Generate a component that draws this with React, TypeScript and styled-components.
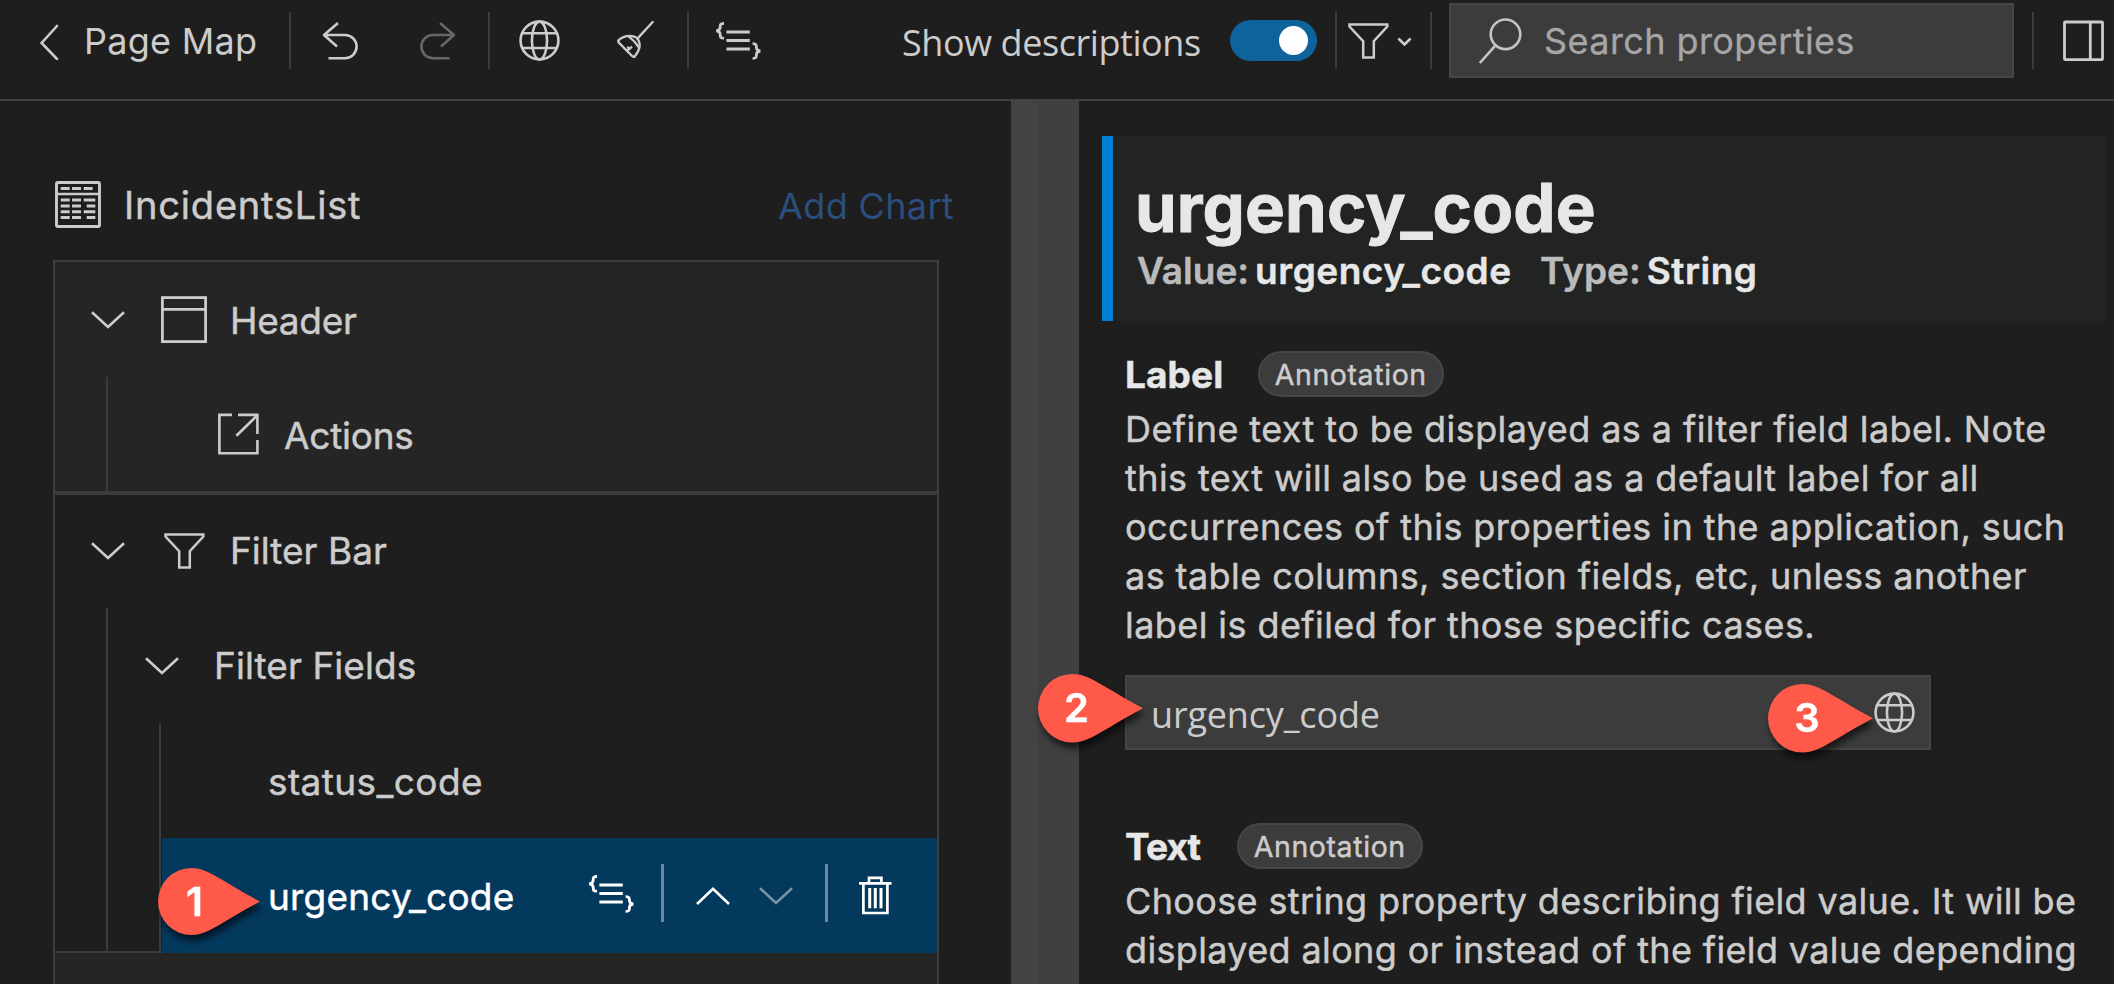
import React from "react";
import styled, { createGlobalStyle, css } from "styled-components";

const sans = `Inter, "Liberation Sans", sans-serif`;
const humanist = `"Open Sans", "Noto Sans", sans-serif`;

const color = {
  bg: "#1e1e1e",
  raised: "#252525",
  line: "#3c3c3c",
  toolbarLine: "#424242",
  text: "#cccccc",
  strong: "#e7e7e7",
  dim: "#bbbbbb",
  field: "#3c3c3c",
  fieldBorder: "#454545",
  selection: "#04395e",
  accent: "#007fd4",
  link: "#2b4e7e",
  toggle: "#0e639c",
  marker: "#ff594a",
};

const GlobalStyle = createGlobalStyle`
  * { box-sizing: border-box; }
  html, body { margin: 0; background: ${color.bg}; overflow: hidden; }
  button { all: unset; box-sizing: border-box; cursor: pointer; }
`;

const Page = styled.div`
  width: 2114px;
  height: 984px;
  overflow: hidden;
  display: flex;
  flex-direction: column;
  background: ${color.bg};
  color: ${color.text};
  font: 400 37px/1 ${sans};
  white-space: nowrap;
`;

/* ---------- toolbar ---------- */

const Toolbar = styled.header`
  flex: none;
  height: 101px;
  padding-bottom: 18px;
  display: flex;
  align-items: center;
  border-bottom: 2px solid ${color.toolbarLine};
`;

const Divider = styled.span`
  flex: none;
  width: 2px;
  height: 57px;
  background: ${color.line};
`;

const BackButton = styled.button`
  flex: none;
  display: flex;
  align-items: center;
  gap: 25px;
  width: 289px;
  padding-left: 39px;
  font: 400 36px/50px ${sans};
  letter-spacing: 0.27px;
`;

const ToolGroup = styled.div`
  flex: none;
  display: flex;
  width: 197px;
`;

const ToolButton = styled.button<{ $disabled?: boolean }>`
  flex: none;
  display: flex;
  justify-content: center;
  width: 98px;
  opacity: ${(p) => (p.$disabled ? 0.42 : 1)};
`;

const SwitchGroup = styled.label`
  flex: none;
  display: flex;
  align-items: center;
  justify-content: space-between;
  width: 415px;
  margin: 0 18px 0 115px;
`;

const SwitchText = styled.span`
  padding-top: 5px;
  font: 400 36px/50px ${humanist};
  letter-spacing: -0.43px;
`;

const Switch = styled.span`
  display: flex;
  align-items: center;
  justify-content: flex-end;
  width: 87px;
  height: 41px;
  padding-right: 9px;
  border-radius: 20.5px;
  background: ${color.toggle};
`;

const Knob = styled.span`
  width: 29px;
  height: 29px;
  border-radius: 50%;
  background: #fff;
`;

const FilterButton = styled.button`
  flex: none;
  display: flex;
  align-items: center;
  gap: 8px;
  width: 93px;
  padding-left: 11px;
`;

const SearchBox = styled.div`
  flex: none;
  display: flex;
  align-items: center;
  gap: 22px;
  width: 565px;
  height: 75px;
  margin: 0 18px 0 17px;
  padding-left: 27px;
  border: 2px solid ${color.fieldBorder};
  background: ${color.field};
  color: #a6a6a6;
  font: 400 36px/50px ${sans};
  letter-spacing: 0.42px;
  -webkit-text-stroke: 0.3px;

  svg {
    color: #c5c5c5;
  }
`;

const LayoutButton = styled.button`
  flex: none;
  display: flex;
  padding-left: 29px;
`;

/* ---------- left panel ---------- */

const Body = styled.main`
  flex: 1;
  min-height: 0;
  display: flex;
  -webkit-text-stroke: 0.45px;
`;

const OutlinePanel = styled.section`
  flex: none;
  width: 1011px;
  padding: 79px 72px 0 53px;
`;

const OutlineHeading = styled.div`
  display: flex;
  align-items: center;
  height: 48px;
  margin-bottom: 32px;
  padding-left: 2px;
`;

const OutlineTitle = styled.h2`
  flex: 1;
  margin: 0 0 0 23px;
  padding-top: 2px;
  font: 400 38px/46px ${sans};
  letter-spacing: 0.81px;
`;

const AddChart = styled.a`
  margin-right: -15px;
  padding-top: 3px;
  color: ${color.link};
  font: 400 36px/46px ${sans};
  letter-spacing: 0.35px;
  -webkit-text-stroke: 0;
`;

const Tree = styled.div`
  width: 886px;
  border: solid ${color.line};
  border-width: 0 2px;
`;

const TreeSection = styled.div<{ $raised?: boolean; $height: number }>`
  height: ${(p) => p.$height}px;
  border: solid ${color.line};
  border-width: 2px 0;
  background: ${(p) => (p.$raised ? color.raised : color.bg)};
`;

const TreeTail = styled.div`
  height: 31px;
  background: ${color.raised};
`;

const Branch = styled.div`
  margin-left: 51px;
  border-left: 2px solid ${color.line};
`;

const TreeRow = styled.div<{
  $indent: number;
  $gap?: number;
  $height?: number;
  $bottom?: number;
  $spacing?: number;
  $selected?: boolean;
}>`
  display: flex;
  align-items: center;
  gap: ${(p) => p.$gap ?? 0}px;
  height: ${(p) => p.$height ?? 115}px;
  padding: 0 0 ${(p) => p.$bottom ?? 0}px ${(p) => p.$indent}px;
  letter-spacing: ${(p) => p.$spacing ?? 0}px;
  ${(p) =>
    p.$selected &&
    css`
      position: relative;
      margin-left: 1px;
      background: ${color.selection};
      color: #fff;
    `}
`;

const IconSlot = styled.span`
  display: flex;
  justify-content: center;
  width: 46px;
`;

const RowLabel = styled.span<{ $drop?: number; $width?: number; $pull?: number }>`
  flex: none;
  ${(p) => p.$width && `width: ${p.$width}px;`}
  margin-left: ${(p) => p.$pull ?? 0}px;
  padding-top: ${(p) => p.$drop ?? 0}px;
  line-height: 46px;
`;

const RowActions = styled.div`
  display: flex;
  align-items: center;
`;

const RowAction = styled.button<{ $before: number; $raise?: number; $faded?: boolean }>`
  display: flex;
  margin-left: ${(p) => p.$before}px;
  padding-bottom: ${(p) => p.$raise ?? 0}px;
  opacity: ${(p) => (p.$faded ? 0.45 : 1)};
`;

const RowDivider = styled.span<{ $before: number }>`
  width: 3px;
  height: 58px;
  margin: 0 0 5px ${(p) => p.$before}px;
  background: #6b88a0;
`;

/* ---------- right panel ---------- */

const Splitter = styled.div`
  flex: none;
  width: 68px;
  background: linear-gradient(90deg, #434343 0 27px, #404040 27px);
`;

const PropertyPanel = styled.section`
  flex: 1;
  min-width: 0;
  padding: 35px 9px 0 23px;
`;

const Summary = styled.div`
  height: 185px;
  padding: 32px 0 0 22px;
  border-left: 11px solid ${color.accent};
  background: #222424;
  color: ${color.strong};
`;

const SummaryTitle = styled.h1`
  margin: 0;
  font: 700 67px/80px ${sans};
  letter-spacing: 0.13px;
  -webkit-text-stroke: 0.9px;
`;

const Meta = styled.dl`
  display: flex;
  margin: 0;
  padding-left: 2px;
  font: 600 37px/46px ${sans};
`;

const MetaName = styled.dt`
  color: ${color.dim};
`;

const MetaValue = styled.dd<{ $width: number }>`
  width: ${(p) => p.$width}px;
  margin: 0 0 0 6px;
  letter-spacing: 0.51px;
`;

const Property = styled.article<{ $top: number }>`
  margin: ${(p) => p.$top}px 0 0 23px;
`;

const PropertyHead = styled.div`
  display: flex;
  align-items: center;
  height: 46px;
`;

const PropertyName = styled.h3<{ $width: number; $spacing: number }>`
  width: ${(p) => p.$width}px;
  margin: 0;
  padding-top: 2px;
  color: ${color.strong};
  font: 700 37px/46px ${sans};
  letter-spacing: ${(p) => p.$spacing}px;
`;

const Chip = styled.span`
  display: flex;
  justify-content: center;
  width: 185.5px;
  height: 46px;
  border: 2px solid #464646;
  border-radius: 23px;
  background: ${color.field};
  font: 400 28.5px/44px ${sans};
  letter-spacing: 0.6px;
`;

const Description = styled.p<{ $spacing: number }>`
  margin: 8px 0 0;
  font: 400 36px/49px ${sans};
  letter-spacing: ${(p) => p.$spacing}px;
`;

const Field = styled.div`
  position: relative;
  display: flex;
  align-items: center;
  justify-content: space-between;
  width: 806px;
  height: 75px;
  margin-top: 25px;
  padding: 0 14px 0 24px;
  border: 2px solid ${color.fieldBorder};
  background: ${color.field};
`;

const FieldText = styled.span`
  padding-top: 5px;
  font: 400 36px/50px ${humanist};
  letter-spacing: -0.17px;
  -webkit-text-stroke: 0;
`;

/* ---------- callouts ---------- */

const Pin = styled.div<{ $left: number; $top: number }>`
  position: absolute;
  left: ${(p) => p.$left}px;
  top: ${(p) => p.$top}px;
  z-index: 2;
  display: grid;
  filter: drop-shadow(2px 6px 3px rgba(0, 0, 0, 0.6));
  > * {
    grid-area: 1 / 1;
  }
`;

const PinNumber = styled.span<{ $width: number }>`
  width: ${(p) => p.$width}px;
  text-align: center;
  color: #fff;
  font: 600 40px/68px ${sans};
  letter-spacing: 0;
`;

type CalloutProps = { n: number; left: number; top: number; width?: number; height?: number; labelWidth?: number };

const Callout = ({ n, left, top, width = 105, height = 68.5, labelWidth = 78 }: CalloutProps) => (
  <Pin $left={left} $top={top}>
    <svg width={width} height={height} viewBox="0 0 102 67" preserveAspectRatio="none">
      <path d="M33.5 0C50 0 62 12 102 33.5C62 55 50 67 33.5 67A33.5 33.5 0 0 1 33.5 0Z" fill={color.marker} />
    </svg>
    <PinNumber $width={labelWidth}>{n}</PinNumber>
  </Pin>
);

/* ---------- icons ---------- */

type IconProps = { w: number; h: number; sw?: number; children: React.ReactNode };

const Icon = ({ w, h, sw = 2.6, children }: IconProps) => (
  <svg width={w} height={h} viewBox={`0 0 ${w} ${h}`} fill="none" stroke="currentColor" strokeWidth={sw} aria-hidden="true">
    {children}
  </svg>
);

const BackIcon = () => (
  <Icon w={20} h={38}>
    <path d="M18 4L2.6 21L18 37" strokeLinecap="round" />
  </Icon>
);

const UndoIcon = () => (
  <Icon w={36} h={40}>
    <path d="M2 14H23A11.6 11.6 0 0 1 23 37.2H6.5M16 2L2 14L15 25.5" strokeLinejoin="round" />
  </Icon>
);

const RedoIcon = () => (
  <Icon w={36} h={40}>
    <path d="M34 14H13A11.6 11.6 0 0 0 13 37.2H29.5M20 2L34 14L21 25.5" strokeLinejoin="round" />
  </Icon>
);

const GlobeIcon = () => (
  <Icon w={41} h={41}>
    <circle cx="20.5" cy="20.5" r="18.9" />
    <ellipse cx="20.5" cy="20.5" rx="7.6" ry="18.9" />
    <path d="M3.5 13.3H37.5M3.5 28H37.5" />
  </Icon>
);

const BroomIcon = () => (
  <Icon w={40} h={38} sw={2.3}>
    <path d="M35.7 2L20.4 18.6" strokeLinecap="round" />
    <path d="M1.2 20.6Q6 16 12.6 15.9Q18 16 20.4 18.6Q22.6 21 22.7 26.4Q21.8 32 17.3 37Q15.6 37 13.8 34.8L1.6 22.4Z" strokeLinejoin="round" />
    <path d="M11.6 16.4Q17.5 20.6 22 27.6M9.6 31.2L12.8 28.6L15 26.6M12.8 28.8L10.2 27" />
  </Icon>
);

const CodeIcon = () => (
  <Icon w={47} h={38} sw={2.8}>
    <path d="M9 1.5C5.3 1.3 5.2 3 5.2 5C5.2 7.6 4.2 8.6 1.2 8.8C4.2 9 5.2 10 5.2 12.6C5.2 14.8 5.3 16.4 9 16.2" />
    <path d="M11.4 10H34.8M11.4 18.5H34.8M11.4 27H34.8" />
    <path d="M37.6 21.6C41.3 21.4 41.4 23.2 41.4 25.2C41.4 27.8 42.4 28.8 45.4 29C42.4 29.2 41.4 30.2 41.4 32.8C41.4 35 41.3 36.6 37.6 36.4" />
  </Icon>
);

const FunnelIcon = () => (
  <Icon w={41} h={36} sw={2.5}>
    <path d="M1.5 1.4H39.3V3.6L25.8 18.2V34.4H15.2V18.2L1.5 3.6Z" />
  </Icon>
);

const SmallChevron = () => (
  <Icon w={15} h={11}>
    <path d="M1.4 3.5L7.5 9.5L13.6 3.5" />
  </Icon>
);

const SearchIcon = () => (
  <Icon w={44} h={46}>
    <circle cx="27.5" cy="16.3" r="14.8" />
    <path d="M17.3 27.6L1.8 45" />
  </Icon>
);

const SidebarIcon = () => (
  <Icon w={41} h={41} sw={2.8}>
    <rect x="1.5" y="2" width="38" height="37.6" rx="0.8" />
    <path d="M27.3 2V40" />
  </Icon>
);

const TableIcon = () => (
  <Icon w={46} h={47}>
    <rect x="1.5" y="1.5" width="43" height="44" rx="1.4" strokeWidth="2.9" />
    <path d="M1.4 12.9H44.6" strokeWidth="2.5" />
    <path
      strokeWidth="3"
      d="M5.7 7.5h9M17 7.5h9M28.7 7.5h9M5.7 19h9M17 19h9M28.7 19h11.6M5.7 25h9M17 25h9M31.7 25h8.6M5.7 30.7h9M17 30.7h9M28.7 30.7h11.6M5.7 36.4h9M17 36.4h9M31.7 36.4h8.6"
    />
  </Icon>
);

const HeaderIcon = () => (
  <Icon w={46} h={47} sw={2.8}>
    <rect x="1.4" y="1.6" width="43.2" height="44" />
    <path d="M1.4 13.4H44.6" />
  </Icon>
);

const ActionIcon = () => (
  <Icon w={41} h={42}>
    <path d="M14 1.9H1.4V40.2H39.4V27M20 1.9H39.4V21M39 2.6L18.4 22.8" />
  </Icon>
);

const ChevronDown = () => (
  <Icon w={34} h={18}>
    <path d="M1 1.2L17 16L33 1.2" />
  </Icon>
);

const ChevronUp = () => (
  <Icon w={34} h={18}>
    <path d="M1 17L17 1.8L33 17" />
  </Icon>
);

const TrashIcon = () => (
  <Icon w={33} h={39} sw={2.7}>
    <path d="M0 7.4H32.5M10 7V1.8H22.4V7M4.4 7.4V37H28.4V7.4" />
    <path d="M10.7 12V32.2M16.3 12V32.2M22 12V32.2" strokeWidth="3" />
  </Icon>
);

/* ---------- data ---------- */

const properties = [
  {
    name: "Label",
    nameWidth: 133,
    nameSpacing: 0.11,
    spacing: 0.42,
    lines: [
      "Define text to be displayed as a filter field label. Note",
      "this text will also be used as a default label for all",
      "occurrences of this properties in the application, such",
      "as table columns, section fields, etc, unless another",
      "label is defiled for those specific cases.",
    ],
    value: "urgency_code",
  },
  {
    name: "Text",
    nameWidth: 112,
    nameSpacing: -0.83,
    spacing: 0.36,
    lines: [
      "Choose string property describing field value. It will be",
      "displayed along or instead of the field value depending",
    ],
  },
];

const App = () => (
  <>
    <GlobalStyle />
    <Page>
      <Toolbar>
        <BackButton>
          <BackIcon />
          Page Map
        </BackButton>
        <Divider />
        <ToolGroup>
          <ToolButton aria-label="Undo"><UndoIcon /></ToolButton>
          <ToolButton aria-label="Redo" $disabled><RedoIcon /></ToolButton>
        </ToolGroup>
        <Divider />
        <ToolGroup>
          <ToolButton aria-label="Translate"><GlobeIcon /></ToolButton>
          <ToolButton aria-label="Clean up"><BroomIcon /></ToolButton>
        </ToolGroup>
        <Divider />
        <ToolButton aria-label="Source"><CodeIcon /></ToolButton>
        <SwitchGroup>
          <SwitchText>Show descriptions</SwitchText>
          <Switch><Knob /></Switch>
        </SwitchGroup>
        <Divider />
        <FilterButton aria-label="Filter">
          <FunnelIcon />
          <SmallChevron />
        </FilterButton>
        <Divider />
        <SearchBox>
          <SearchIcon />
          Search properties
        </SearchBox>
        <Divider />
        <LayoutButton aria-label="Panel layout"><SidebarIcon /></LayoutButton>
      </Toolbar>

      <Body>
        <OutlinePanel>
          <OutlineHeading>
            <TableIcon />
            <OutlineTitle>IncidentsList</OutlineTitle>
            <AddChart>Add Chart</AddChart>
          </OutlineHeading>
          <Tree>
            <TreeSection $raised $height={233}>
              <TreeRow $indent={36} $gap={36} $spacing={-0.29}>
                <ChevronDown />
                <IconSlot><HeaderIcon /></IconSlot>
                <RowLabel $drop={2} $pull={-13}>Header</RowLabel>
              </TreeRow>
              <Branch>
                <TreeRow $indent={110} $gap={25} $height={114} $spacing={-0.25}>
                  <ActionIcon />
                  <RowLabel $drop={3}>Actions</RowLabel>
                </TreeRow>
              </Branch>
            </TreeSection>
            <TreeSection $height={460}>
              <TreeRow $indent={36} $gap={36} $height={113} $bottom={2}>
                <ChevronDown />
                <IconSlot><FunnelIcon /></IconSlot>
                <RowLabel $pull={-13}>Filter Bar</RowLabel>
              </TreeRow>
              <Branch>
                <TreeRow $indent={37} $gap={35} $spacing={0.06}>
                  <ChevronDown />
                  <RowLabel>Filter Fields</RowLabel>
                </TreeRow>
                <Branch>
                  <TreeRow $indent={107} $spacing={0.4}>
                    <RowLabel $drop={2}>status_code</RowLabel>
                  </TreeRow>
                  <TreeRow $indent={106} $spacing={0.2} $selected>
                    <RowLabel $drop={2} $width={320}>urgency_code</RowLabel>
                    <RowActions>
                      <RowAction $before={0} $raise={3} aria-label="Source"><CodeIcon /></RowAction>
                      <RowDivider $before={26} />
                      <RowAction $before={32} aria-label="Move up"><ChevronUp /></RowAction>
                      <RowAction $before={29} $faded aria-label="Move down"><ChevronDown /></RowAction>
                      <RowDivider $before={32} />
                      <RowAction $before={31} $raise={1} aria-label="Delete"><TrashIcon /></RowAction>
                    </RowActions>
                    <Callout n={1} left={-4} top={30} width={102} height={67} labelWidth={73} />
                  </TreeRow>
                </Branch>
              </Branch>
            </TreeSection>
            <TreeTail />
          </Tree>
        </OutlinePanel>

        <Splitter />

        <PropertyPanel>
          <Summary>
            <SummaryTitle>urgency_code</SummaryTitle>
            <Meta>
              <MetaName>Value:</MetaName>
              <MetaValue $width={285}>urgency_code</MetaValue>
              <MetaName>Type:</MetaName>
              <MetaValue $width={110}>String</MetaValue>
            </Meta>
          </Summary>
          {properties.map((p, i) => (
            <Property key={p.name} $top={i === 0 ? 30 : 73}>
              <PropertyHead>
                <PropertyName $width={p.nameWidth} $spacing={p.nameSpacing}>{p.name}</PropertyName>
                <Chip>Annotation</Chip>
              </PropertyHead>
              <Description $spacing={p.spacing}>
                {p.lines.map((line) => (
                  <React.Fragment key={line}>
                    {line}
                    <br />
                  </React.Fragment>
                ))}
              </Description>
              {p.value && (
                <Field>
                  <FieldText>{p.value}</FieldText>
                  <GlobeIcon />
                  <Callout n={2} left={-89.5} top={-3} />
                  <Callout n={3} left={641} top={7} />
                </Field>
              )}
            </Property>
          ))}
        </PropertyPanel>
      </Body>
    </Page>
  </>
);

export default App;
